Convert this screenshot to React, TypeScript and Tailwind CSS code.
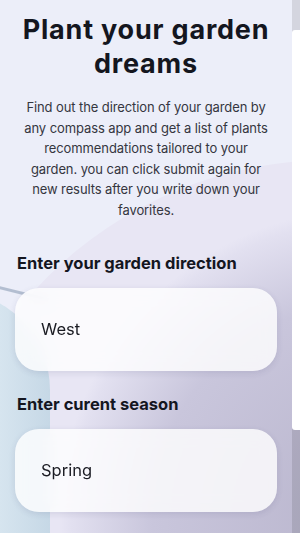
import React from 'react'

function Field({ label, value }: { label: string; value: string }) {
  return (
    <div className="flex flex-col">
      <label className="px-[17px] text-[16.5px] font-bold leading-[22px] text-[#14161f]">{label}</label>
      <div className="mx-[15px] mt-[14px] flex h-[83px] items-center rounded-[24px] bg-white/80 px-[26px] shadow-[0_2px_6px_rgba(60,60,110,0.12)] backdrop-blur-sm">
        <span className="text-[16.5px] text-[#1a1b22]">{value}</span>
      </div>
    </div>
  )
}

export default function App() {
  return (
    <div className="relative flex h-[533px] w-[300px] overflow-hidden bg-[#eceef9] font-['Inter',sans-serif]">
      {/* background shapes */}
      <div className="pointer-events-none absolute left-[-70px] top-[160px] h-[800px] w-[800px] rounded-full bg-[radial-gradient(circle_at_55%_45%,#b8b4cc_0%,#c9c6dc_35%,#e2e0f0_48%,#e8e6f4_50%)]" />
      <div className="pointer-events-none absolute left-[-150px] top-[290px] h-[420px] w-[200px] rounded-full bg-[linear-gradient(90deg,#b9d3e4,#d8e6f0_72%,#c6d8e6)]" />
      <div className="pointer-events-none absolute left-[-60px] top-[285px] h-[3px] w-[110px] rotate-[14deg] bg-[#8d9fb5]/60" />

      <main className="relative flex w-[292px] flex-col">
        <h1 className="mt-[13px] px-3 text-center text-[27px] font-bold leading-[34px] tracking-[0.8px] text-[#14161f]">
          Plant your garden dreams
        </h1>
        <p className="mt-[16px] px-[16px] text-center text-[13px] leading-[20.5px] tracking-[-0.1px] text-[#35363f]">
          Find out the direction of your garden by
          <br />
          any compass app and get a list of plants
          <br />
          recommendations tailored to your
          <br />
          garden. you can click submit again for
          <br />
          new results after you write down your
          <br />
          favorites.
        </p>
        <div className="mt-[32px] flex flex-col gap-[22px]">
          <Field label="Enter your garden direction" value="West" />
          <Field label="Enter curent season" value="Spring" />
        </div>
      </main>

      {/* scrollbar */}
      <div className="relative flex w-[8px] flex-col bg-black/10">
        <div className="mt-[30px] h-[400px] w-full rounded-l-[3px] bg-white" />
      </div>
    </div>
  )
}
